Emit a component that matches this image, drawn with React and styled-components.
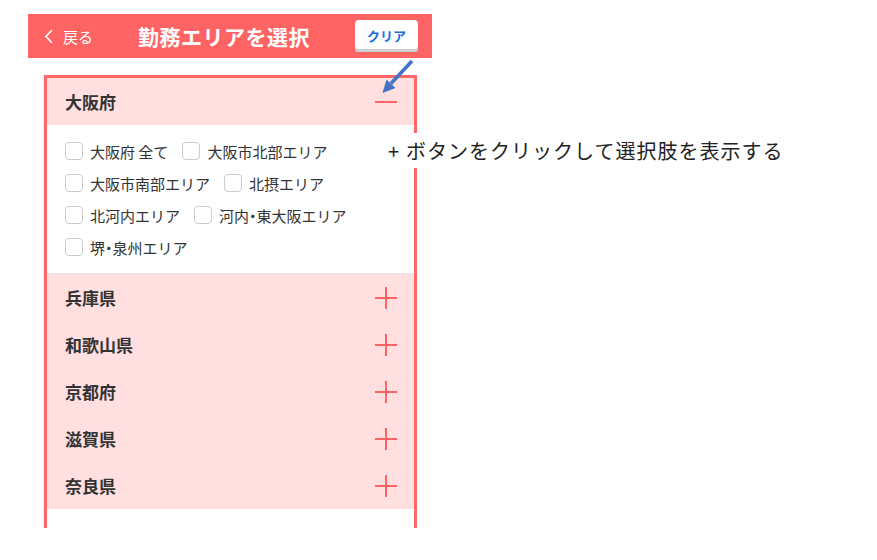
import React from "react";
import styled, { createGlobalStyle } from "styled-components";

const GlobalStyle = createGlobalStyle`
  body {
    margin: 0;
    background: #ffffff;
    font-family: "Noto Sans CJK JP", "Noto Sans", sans-serif;
  }
`;

const Page = styled.div`
  position: relative;
  width: 877px;
  height: 560px;
  padding: 14px 0 0 28px;
  box-sizing: border-box;
`;

const Screen = styled.div`
  width: 404px;
`;

const Header = styled.div`
  height: 44px;
  background: #ff6464;
  display: flex;
  align-items: center;
  justify-content: space-between;
  padding: 0 14px 0 16px;
  box-sizing: border-box;
`;

const Back = styled.div`
  display: flex;
  align-items: center;
  gap: 9px;
  color: #ffffff;
  font-size: 15px;
`;

const Title = styled.h1`
  margin: 0;
  color: #ffffff;
  font-size: 21px;
  font-weight: 700;
  letter-spacing: 0.5px;
`;

const ClearButton = styled.button`
  width: 63px;
  height: 32px;
  border: none;
  border-radius: 4px;
  background: #ffffff;
  box-shadow: inset 0 -3px 0 #cfcfcf;
  color: #1a6fe0;
  font-family: inherit;
  font-size: 13px;
  font-weight: 700;
  padding: 0 0 2px;
`;

const Panel = styled.div`
  margin: 17px 15px 0 16px;
  border: 3px solid #ff6666;
  border-bottom: none;
  height: 453px;
  box-sizing: border-box;
  box-shadow: -1px 0 0 #eeeeee;
`;

const PrefRow = styled.div`
  height: 47px;
  background: #ffdfdf;
  display: flex;
  align-items: center;
  justify-content: space-between;
  padding: 0 17px 0 18px;
  font-size: 17px;
  font-weight: 700;
  color: #333333;
`;

const Options = styled.div`
  background: #ffffff;
  padding: 10px 12px 10px 18px;
  border-bottom: 1px solid #e4e4e4;
  display: flex;
  flex-wrap: wrap;
`;

const Option = styled.label`
  height: 32px;
  display: flex;
  align-items: center;
  gap: 7px;
  margin-right: 14px;
  font-size: 15px;
  color: #333333;
`;

const Label = styled.span`
  font-feature-settings: "halt" 0;
`;

const Dot = styled.span`
  font-feature-settings: "halt" 1;
`;

const Box = styled.span`
  width: 18px;
  height: 18px;
  border: 1px solid #cccccc;
  border-radius: 4px;
  box-sizing: border-box;
  background: #ffffff;
`;

const Note = styled.div`
  position: absolute;
  left: 382px;
  top: 133px;
  height: 35px;
  padding: 0 10px 0 6px;
  background: #ffffff;
  display: flex;
  align-items: center;
  font-size: 20px;
  font-weight: 400;
  letter-spacing: 1px;
  color: #222222;
`;

const Plus = styled.span`
  font-size: 20px;
  margin-right: 6px;
`;

const Arrow = styled.svg`
  position: absolute;
  left: 378px;
  top: 56px;
`;

const Toggle = ({ open }) => (
  <svg width="22" height="22" viewBox="0 0 22 22">
    <line x1="0" y1="11" x2="22" y2="11" stroke="#ff6464" strokeWidth="2" />
    {!open && <line x1="11" y1="0" x2="11" y2="22" stroke="#ff6464" strokeWidth="2" />}
  </svg>
);

const withDot = (text) =>
  text.split("・").flatMap((part, i) =>
    i === 0 ? [part] : [<Dot key={i}>・</Dot>, part]
  );

const osaka = [
  "大阪府 全て",
  "大阪市北部エリア",
  "大阪市南部エリア",
  "北摂エリア",
  "北河内エリア",
  "河内・東大阪エリア",
  "堺・泉州エリア",
];

const others = ["兵庫県", "和歌山県", "京都府", "滋賀県", "奈良県"];

export default function App() {
  return (
    <Page>
      <GlobalStyle />
      <Screen>
        <Header>
          <Back>
            <svg width="10" height="15" viewBox="0 0 10 15">
              <polyline points="8,1 2,7.5 8,14" fill="none" stroke="#fff" strokeWidth="1.6" />
            </svg>
            戻る
          </Back>
          <Title>勤務エリアを選択</Title>
          <ClearButton>クリア</ClearButton>
        </Header>
        <Panel>
          <PrefRow>
            大阪府
            <Toggle open />
          </PrefRow>
          <Options>
            {osaka.map((o) => (
              <Option key={o}>
                <Box />
                <Label>{withDot(o)}</Label>
              </Option>
            ))}
          </Options>
          {others.map((p) => (
            <PrefRow key={p}>
              {p}
              <Toggle />
            </PrefRow>
          ))}
        </Panel>
      </Screen>
      <Arrow width="40" height="40" viewBox="0 0 40 40">
        <line x1="34" y1="5" x2="13" y2="27.5" stroke="#4472c4" strokeWidth="3.6" />
        <polygon points="4.5,37 17.5,32 8.5,23.5" fill="#4472c4" />
      </Arrow>
      <Note>
        <Plus>+</Plus>
        ボタンをクリックして選択肢を表示する
      </Note>
    </Page>
  );
}
